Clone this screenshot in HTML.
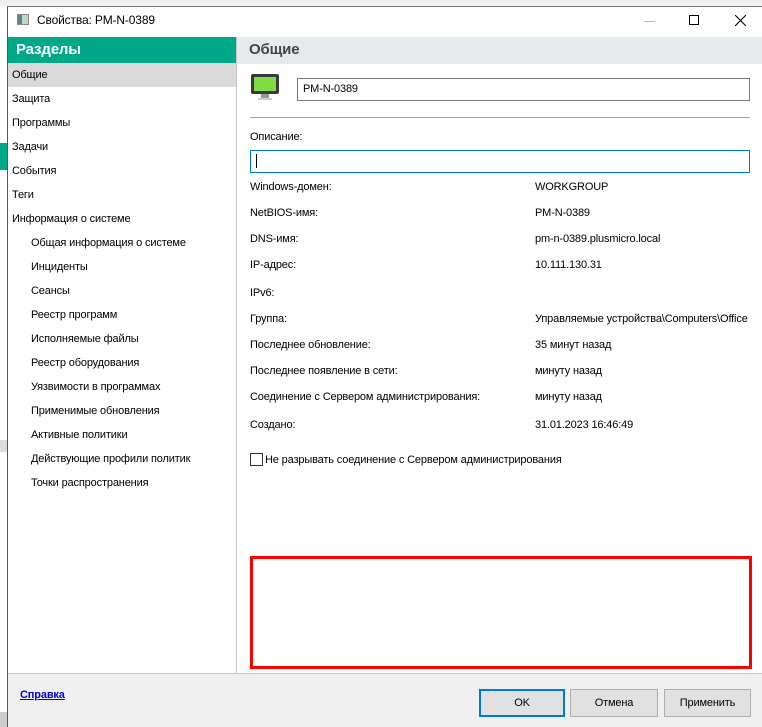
<!DOCTYPE html>
<html><head><meta charset="utf-8"><style>
*{margin:0;padding:0;box-sizing:border-box}
body{width:762px;height:727px;position:relative;overflow:hidden;background:#fff;font-family:"Liberation Sans","DejaVu Sans",sans-serif;font-size:11px;color:#000;letter-spacing:-0.15px}
.a{position:absolute;white-space:nowrap;line-height:14px}
</style></head><body>
<div class="a" style="left:0;top:0;width:762px;height:6px;background:#f0f0f0"></div>
<div class="a" style="left:0;top:6px;width:8px;height:721px;background:#fff"></div>
<div class="a" style="left:0;top:143px;width:8px;height:27px;background:#00a88a"></div>
<div class="a" style="left:0;top:440px;width:8px;height:12px;background:#ddd"></div>
<div class="a" style="left:0;top:712px;width:8px;height:15px;background:#ccc"></div>
<div class="a" style="left:7px;top:6px;width:755px;height:721px;border-left:1px solid #555;border-top:1px solid #777;background:#fff"></div>
<div class="a" style="left:17px;top:14px;width:12px;height:11px;border:1px solid #888;background:linear-gradient(90deg,#607f8f 0 40%,#c0d8c8 40%)"></div>
<div class="a" style="left:37px;top:13px;font-size:12px;">Свойства: PM-N-0389</div>
<div class="a" style="left:644px;top:21px;width:11px;height:1px;background:#bbb"></div>
<div class="a" style="left:689px;top:15px;width:10px;height:10px;border:1px solid #000"></div>
<svg class="a" style="left:735px;top:15px" width="11" height="11"><path d="M0 0L11 11M11 0L0 11" stroke="#000" stroke-width="1.1"/></svg>
<div class="a" style="left:8px;top:37px;width:228px;height:26px;background:#00a88a;color:#fff;font-weight:bold;font-size:15px;padding:4px 0 0 8px;line-height:18px">Разделы</div>
<div class="a" style="left:8px;top:63px;width:228px;height:24px;background:#dadada"></div>
<div class="a" style="left:236px;top:37px;width:1px;height:636px;background:#c8c8c8"></div>
<div class="a" style="left:12px;top:68px">Общие</div>
<div class="a" style="left:12px;top:92px">Защита</div>
<div class="a" style="left:12px;top:116px">Программы</div>
<div class="a" style="left:12px;top:140px">Задачи</div>
<div class="a" style="left:12px;top:164px">События</div>
<div class="a" style="left:12px;top:188px">Теги</div>
<div class="a" style="left:12px;top:212px">Информация о системе</div>
<div class="a" style="left:31px;top:236px">Общая информация о системе</div>
<div class="a" style="left:31px;top:260px">Инциденты</div>
<div class="a" style="left:31px;top:284px">Сеансы</div>
<div class="a" style="left:31px;top:308px">Реестр программ</div>
<div class="a" style="left:31px;top:332px">Исполняемые файлы</div>
<div class="a" style="left:31px;top:356px">Реестр оборудования</div>
<div class="a" style="left:31px;top:380px">Уязвимости в программах</div>
<div class="a" style="left:31px;top:404px">Применимые обновления</div>
<div class="a" style="left:31px;top:428px">Активные политики</div>
<div class="a" style="left:31px;top:452px">Действующие профили политик</div>
<div class="a" style="left:31px;top:476px">Точки распространения</div>
<div class="a" style="left:237px;top:37px;width:525px;height:27px;background:#e6eaed;color:#444;font-weight:bold;font-size:15px;padding:4px 0 0 12px;line-height:18px">Общие</div>
<div class="a" style="left:251px;top:74px;width:28px;height:20px;background:#80dd48;border:3px solid #3a3a3a;border-radius:2px"></div>
<div class="a" style="left:261px;top:94px;width:8px;height:4px;background:#999"></div>
<div class="a" style="left:258px;top:98px;width:14px;height:2px;background:#ccc"></div>
<div class="a" style="left:297px;top:78px;width:453px;height:23px;border:1px solid #7a7a7a;padding:3px 0 0 5px">PM-N-0389</div>
<div class="a" style="left:250px;top:117px;width:500px;height:1px;background:#a0a0a0"></div>
<div class="a" style="left:250px;top:130px">Описание:</div>
<div class="a" style="left:250px;top:150px;width:500px;height:23px;border:1px solid #0078d7"></div>
<div class="a" style="left:256px;top:154px;width:1px;height:14px;background:#000"></div>
<div class="a" style="left:250px;top:180px">Windows-домен:</div><div class="a" style="left:535px;top:180px">WORKGROUP</div>
<div class="a" style="left:250px;top:206px">NetBIOS-имя:</div><div class="a" style="left:535px;top:206px">PM-N-0389</div>
<div class="a" style="left:250px;top:232px">DNS-имя:</div><div class="a" style="left:535px;top:232px">pm-n-0389.plusmicro.local</div>
<div class="a" style="left:250px;top:258px">IP-адрес:</div><div class="a" style="left:535px;top:258px">10.111.130.31</div>
<div class="a" style="left:250px;top:286px">IPv6:</div>
<div class="a" style="left:250px;top:312px">Группа:</div><div class="a" style="left:535px;top:312px;width:215px;overflow:hidden">Управляемые устройства\Computers\Office</div>
<div class="a" style="left:250px;top:338px">Последнее обновление:</div><div class="a" style="left:535px;top:338px">35 минут назад</div>
<div class="a" style="left:250px;top:364px">Последнее появление в сети:</div><div class="a" style="left:535px;top:364px">минуту назад</div>
<div class="a" style="left:250px;top:390px">Соединение с Сервером администрирования:</div><div class="a" style="left:535px;top:390px">минуту назад</div>
<div class="a" style="left:250px;top:418px">Создано:</div><div class="a" style="left:535px;top:418px">31.01.2023 16:46:49</div>
<div class="a" style="left:250px;top:453px;width:13px;height:13px;border:1px solid #333"></div>
<div class="a" style="left:265px;top:453px">Не разрывать соединение с Сервером администрирования</div>
<div class="a" style="left:250px;top:556px;width:502px;height:113px;border:3px solid #f00"></div>
<div class="a" style="left:8px;top:673px;width:754px;height:54px;background:#f0f0f0;border-top:1px solid #c8c8c8"></div>
<div class="a" style="left:20px;top:688px;color:#0000ee;font-weight:bold;text-decoration:underline">Справка</div>
<div class="a" style="left:479px;top:689px;width:86px;height:28px;background:#e1e1e1;border:2px solid #0078d7;text-align:center;line-height:24px">OK</div>
<div class="a" style="left:570px;top:689px;width:88px;height:28px;background:#e1e1e1;border:1px solid #adadad;text-align:center;line-height:26px">Отмена</div>
<div class="a" style="left:664px;top:689px;width:87px;height:28px;background:#e1e1e1;border:1px solid #adadad;text-align:center;line-height:26px">Применить</div>
</body></html>
